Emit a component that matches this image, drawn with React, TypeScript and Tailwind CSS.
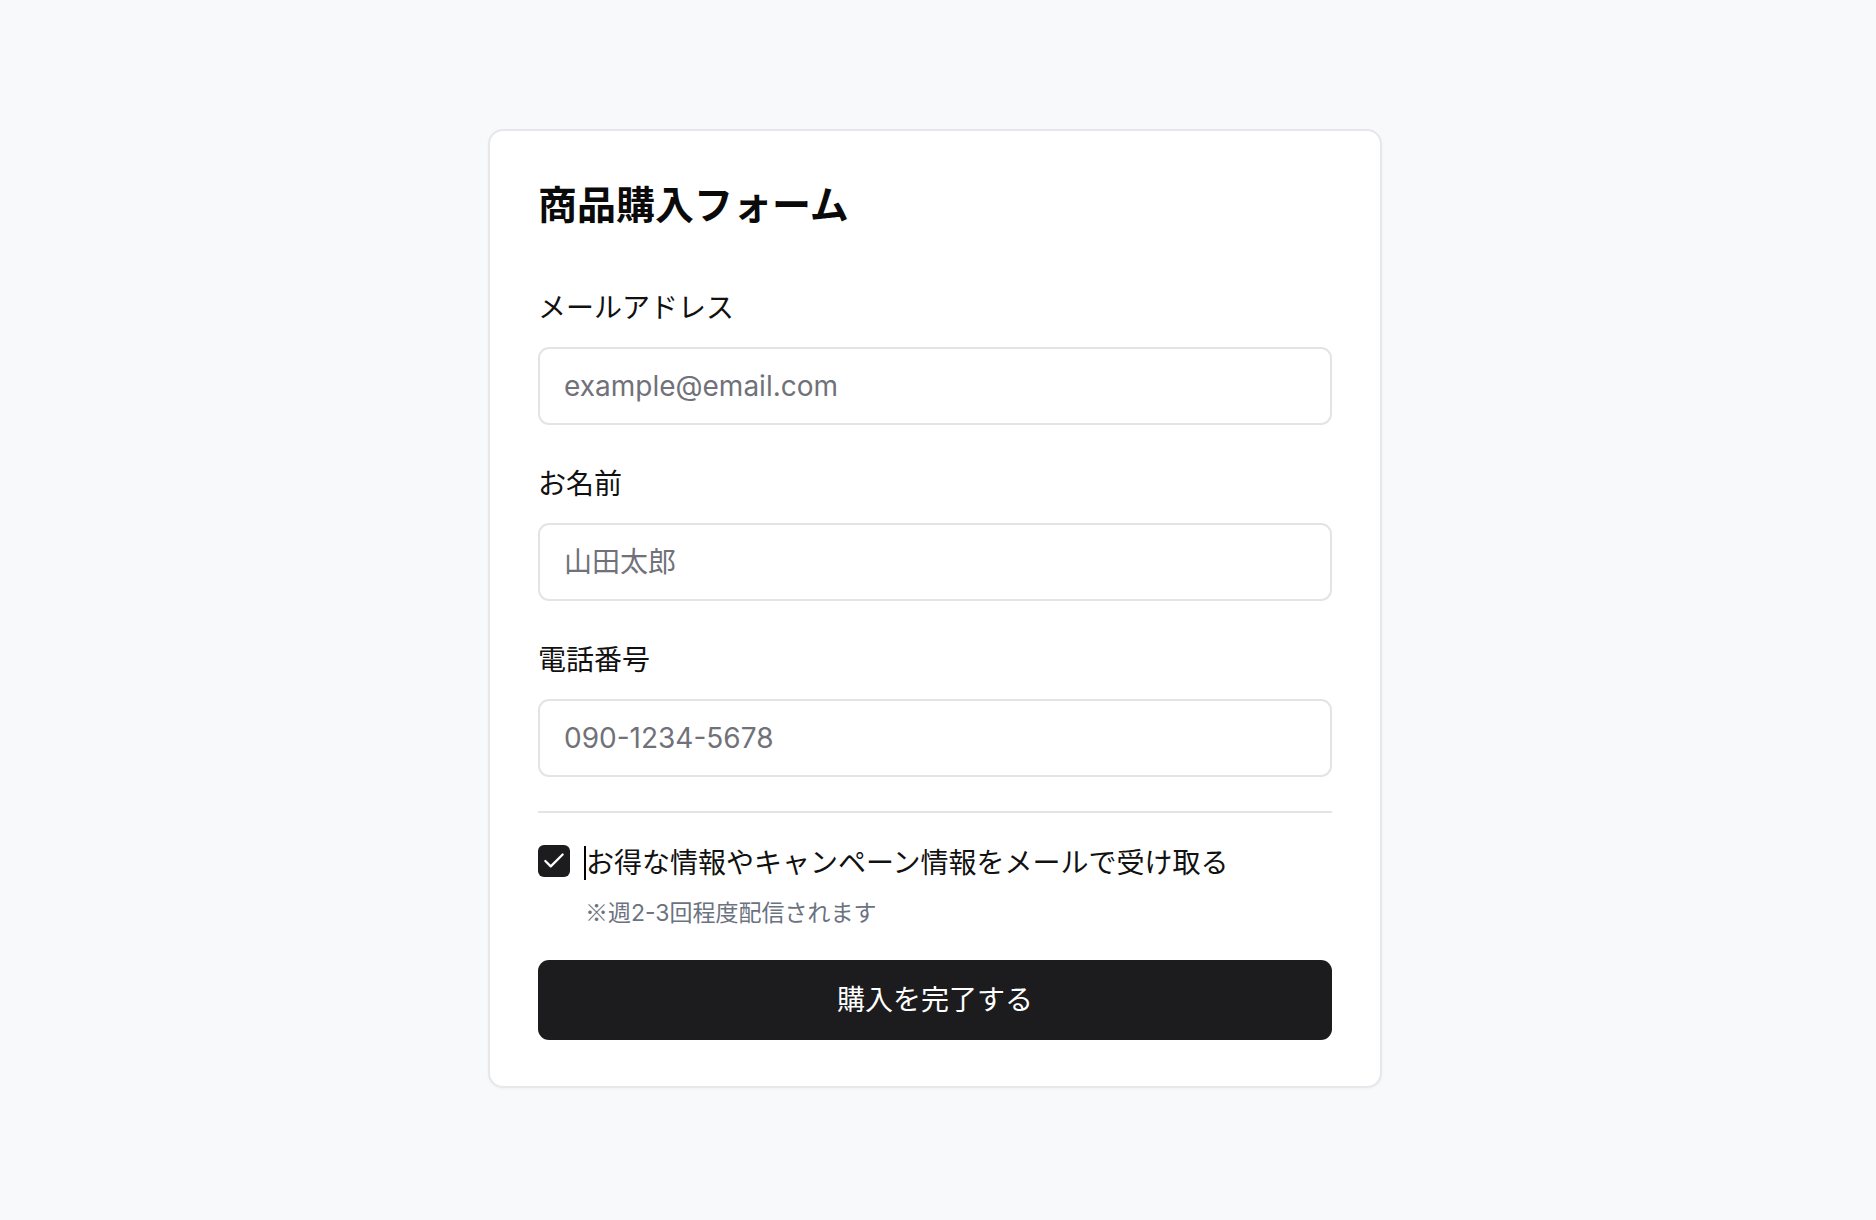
import React from 'react';
import { Check } from 'lucide-react';

const FIELDS = [
  { key: 'email', label: 'メールアドレス', type: 'email', placeholder: 'example@email.com' },
  { key: 'name',  label: 'お名前',         type: 'text',  placeholder: '山田太郎' },
  { key: 'phone', label: '電話番号',       type: 'tel',   placeholder: '090-1234-5678' },
] as const;

const App: React.FC = () => {
  const [newsletter, setNewsletter] = React.useState(true);

  return (
    <div className="flex min-h-screen justify-center bg-[#f8f9fa] pt-[129px] pr-[6px] pb-[120px] font-['Inter','Noto_Sans_CJK_JP',sans-serif] text-[#111111]">
      <div className="h-fit w-[894px] rounded-[15px] border-2 border-[#e6e7ea] bg-white px-[48px] pt-[48px] pb-[46px] shadow-[0_1px_3px_rgba(0,0,0,0.04)]">

        {/* Header */}
        <h1 className="text-[39px] leading-[52px] font-bold text-[#0a0a0a]">商品購入フォーム</h1>

        {/* Fields */}
        <div className="mt-[57px] flex flex-col gap-[39px]">
          {FIELDS.map(({ key, label, type, placeholder }) => (
            <div key={key} className="flex flex-col gap-[19px]">
              <label htmlFor={key} className="text-[28px] leading-[40px]">{label}</label>
              <input
                id={key}
                type={type}
                placeholder={placeholder}
                className="h-[78px] w-full rounded-[11px] border-2 border-[#e4e4e7] bg-white px-[24px] text-[28px] text-[#111111] placeholder:text-[#71717a] focus:outline-none"
              />
            </div>
          ))}
        </div>

        <div className="mt-[34px] h-[2px] w-full bg-[#e4e4e7]" />

        {/* Newsletter */}
        <label className="mt-[28px] flex h-[40px] cursor-pointer items-center gap-[16px]">
          <button
            type="button"
            onClick={() => setNewsletter(v => !v)}
            className={`flex h-[32px] w-[32px] shrink-0 items-center justify-center rounded-[6px] ${
              newsletter ? 'bg-[#1c1c1e]' : 'border-2 border-[#d4d4d8] bg-white'
            }`}
          >
            {newsletter && <Check size={26} strokeWidth={2.1} className="text-white" />}
          </button>
          <span className="relative top-[2px] text-[28px] leading-[40px]">
            <span className="absolute left-[-2px] top-[3px] h-[34px] w-[2px] bg-black" />
            お得な情報やキャンペーン情報をメールで受け取る
          </span>
        </label>
        <p className="mt-[14px] ml-[47px] h-[32px] text-[23px] leading-[32px] text-[#6b7280]">
          <span className="font-['Noto_Sans_CJK_JP',sans-serif]">※</span>週2-3回程度配信されます
        </p>

        {/* Submit */}
        <button
          type="button"
          className="mt-[33px] flex h-[80px] w-full items-center justify-center rounded-[11px] bg-[#1c1c1e] text-[28px] font-normal text-white"
        >
          購入を完了する
        </button>
      </div>
    </div>
  );
};

export default App;
